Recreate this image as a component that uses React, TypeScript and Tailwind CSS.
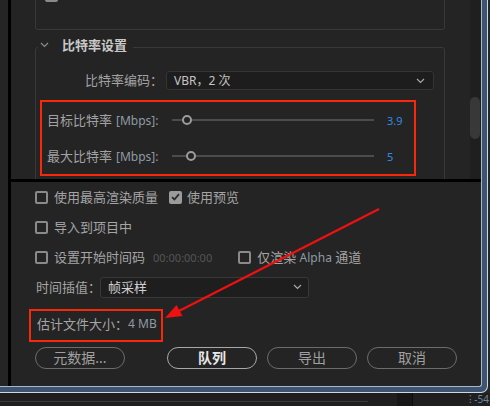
import React from "react";

const Check: React.FC<{ checked?: boolean }> = ({ checked }) =>
  checked ? (
    <span className="flex h-[13px] w-[13px] shrink-0 items-center justify-center rounded-[2px] bg-[#9b9b9b]">
      <svg width="9" height="8" viewBox="0 0 9 8">
        <path d="M1 4.2 L3.4 6.5 L8 1.2" fill="none" stroke="#2a2a2a" strokeWidth="1.8" />
      </svg>
    </span>
  ) : (
    <span className="block h-[13px] w-[13px] shrink-0 rounded-[2px] border-2 border-[#8a8a8a]" />
  );

const Chevron: React.FC<{ color?: string }> = ({ color = "#a8a8a8" }) => (
  <svg width="9" height="6" viewBox="0 0 9 6">
    <path d="M1 1 L4.5 4.5 L8 1" fill="none" stroke={color} strokeWidth="1.2" />
  </svg>
);

const SliderRow: React.FC<{ label: string; thumb: string; value: string }> = ({
  label,
  thumb,
  value,
}) => (
  <div className="flex h-[36px] items-center">
    <div className="w-[125px] whitespace-nowrap text-[13px] text-[#a3a3a3]">
      {label}
      <span className="ml-[4px] text-[12px] text-[#8f9aa4]">[Mbps]:</span>
    </div>
    <div className="relative h-[12px] w-[202px]">
      <div className="mt-[5px] h-[2px] bg-[#4c4c4c]" />
      <span
        className={`absolute top-px h-[10px] w-[10px] rounded-full border-2 border-[#9c9c9c] bg-[#242424] ${thumb}`}
      />
    </div>
    <span className="ml-[13px] text-[11px] text-[#2f8de4]">{value}</span>
  </div>
);

const Pill: React.FC<{ children: React.ReactNode; primary?: boolean; className?: string }> = ({
  children,
  primary,
  className,
}) => (
  <div
    className={`flex h-[22px] w-[90px] items-center justify-center rounded-full border text-[14px] ${
      primary
        ? "border-[#a8a8a8] font-bold text-[#e8e8e8]"
        : "border-[#6c6c6c] text-[#a0a0a0]"
    } ${className ?? ""}`}
  >
    {children}
  </div>
);

const UpperPane = () => (
  <div className="flex h-[179px] overflow-hidden">
    <div className="flex-1 pl-[24px] pr-[25px]">
      <div className="-mt-[21px] h-[51px] rounded-[3px] border border-[#393939] pl-[9px] pt-[9px]">
        <Check />
      </div>
      <fieldset className="mt-[6px] rounded-[3px] border border-[#393939] pb-[30px]">
        <legend className="ml-[2px] flex h-[22px] items-start px-[2px] pr-[6px]">
          <span className="flex h-[18px] w-[10px] items-center">
            <Chevron color="#8c8c8c" />
          </span>
          <span className="ml-[12px] text-[13px] font-bold leading-[18px] text-[#c8c8c8]">
            比特率设置
          </span>
        </legend>
        <div className="mt-[13px] flex items-center">
          <div className="w-[127px] text-right text-[13px] text-[#a3a3a3]">比特率编码：</div>
          <div className="ml-[3px] flex h-[19px] w-[268px] items-center justify-between rounded-[3px] border border-[#343434] bg-[#1d1d1d] pl-[7px] pr-[8px]">
            <span className="text-[12px] text-[#c4c4c4]">VBR，2 次</span>
            <Chevron />
          </div>
        </div>
        <div className="ml-[4px] mt-[10px] w-[376px] border-2 border-[#f8280c] pl-[5px]">
          <SliderRow label="目标比特率" thumb="left-[10px]" value="3.9" />
          <SliderRow label="最大比特率" thumb="left-[14px]" value="5" />
        </div>
      </fieldset>
    </div>
    <div className="w-[11px] bg-[#1f1f1f] pt-[97px]">
      <div className="h-[42px] w-[10px] rounded-full bg-[#383838]" />
    </div>
  </div>
);

const LowerPane = () => (
  <div className="flex-1 whitespace-nowrap pl-[24px] text-[13px] text-[#a5a5a5]">
    <div className="flex h-[30px] items-center">
      <Check />
      <span className="ml-[6px]">使用最高渲染质量</span>
      <span className="ml-[11px]">
        <Check checked />
      </span>
      <span className="ml-[5px]">使用预览</span>
    </div>
    <div className="flex h-[30px] items-center">
      <Check />
      <span className="ml-[6px]">导入到项目中</span>
    </div>
    <div className="flex h-[30px] items-center">
      <Check />
      <span className="ml-[6px]">设置开始时间码</span>
      <span className="ml-[8px] text-[11px] text-[#555555]">00:00:00:00</span>
      <span className="ml-[26px]">
        <Check />
      </span>
      <span className="ml-[6px]">
        仅渲染 <span className="text-[12px] text-[#8f9aa4]">Alpha</span> 通道
      </span>
    </div>
    <div className="flex h-[30px] items-center">
      <span className="ml-px w-[64px] shrink-0">时间插值：</span>
      <div className="flex h-[21px] w-[209px] items-center justify-between rounded-[3px] border border-[#383838] bg-[#1e1e1e] pl-[7px] pr-[6px]">
        <span className="text-[#d0d0d0]">帧采样</span>
        <Chevron />
      </div>
    </div>
    <div className="-ml-[6px] mt-[7px] flex h-[33px] w-[134px] items-center border-2 border-[#f8280c] pb-[3px] pl-[6px]">
      估计文件大小：<span className="text-[12px] text-[#8f9aa4]">4 MB</span>
    </div>
    <div className="mt-[5px] flex">
      <Pill>元数据...</Pill>
      <Pill primary className="ml-[42px]">
        队列
      </Pill>
      <Pill className="ml-[10px]">导出</Pill>
      <Pill className="ml-[10px]">取消</Pill>
    </div>
  </div>
);

export default function App() {
  return (
    <div className="relative h-[406px] w-[490px] overflow-hidden bg-[#242424] font-['Noto_Sans','Noto_Sans_CJK_SC',sans-serif] leading-none">
      <div className="flex h-[393px]">
        <div className="h-[393px] w-[488px] rounded-br-[7px] bg-[#cdd8e3] pb-px pr-px">
          <div className="h-full rounded-br-[6px] bg-[#3d5570] pb-[5px] pr-[5px]">
            <div className="flex h-full overflow-hidden rounded-br-[3px] border-b border-r border-[#a9b8c7] bg-[#242424]">
              <div className="w-[8px] bg-[#252525]" />
              <div className="w-[3px] bg-black" />
              <div className="flex flex-1 flex-col">
                <UpperPane />
                <div className="h-[3px] bg-black" />
                <LowerPane />
              </div>
            </div>
          </div>
        </div>
        <div className="flex-1 bg-[#262626]" />
      </div>
      <div className="flex h-[13px] bg-[#1f1f1f]">
        <div className="h-[9px] w-[368px] border-b border-[#3a3a3a]" />
        <div className="ml-[29px] w-[15px] bg-[#161616]" />
        <div className="w-px bg-[#0c0c0c]" />
        <div className="flex-1" />
        <span className="pr-px text-[10px] leading-[13px] text-[#6d86a0]">⁝ -54</span>
      </div>
      <svg
        className="pointer-events-none absolute left-0 top-0"
        width="490"
        height="406"
        viewBox="0 0 490 406"
      >
        <line x1="379" y1="209" x2="178" y2="311.5" stroke="#f01010" strokeWidth="2.2" />
        <polygon points="165,318 182.5,316 176.5,305" fill="#f01010" />
      </svg>
    </div>
  );
}
